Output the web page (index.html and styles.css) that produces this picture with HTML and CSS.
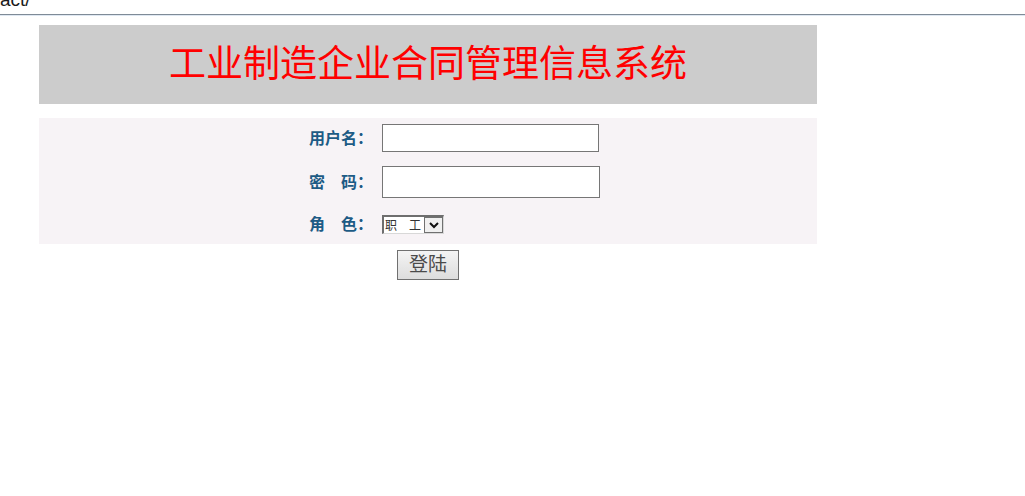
FILE: index.html
```html
<!DOCTYPE html>
<html lang="zh">
<head>
<meta charset="utf-8">
<title>工业制造企业合同管理信息系统</title>
<link rel="stylesheet" href="styles.css">
</head>
<body>
<div class="addr"><span class="addr-text">act/</span></div>
<div class="rule"></div>
<div class="page">
  <div class="banner">工业制造企业合同管理信息系统</div>
  <form class="panel">
    <div class="row row-user">
      <label class="lbl">用户名：</label>
      <input class="field field-user" type="text">
    </div>
    <div class="row row-pass">
      <label class="lbl">密　码：</label>
      <input class="field field-pass" type="password">
    </div>
    <div class="row row-role">
      <label class="lbl">角　色：</label>
      <span class="sel">
        <span class="sel-text">职　工</span>
        <span class="sel-btn"><svg width="14" height="10" viewBox="0 0 14 10"><path d="M3 3 L7 7 L11 3" fill="none" stroke="#111" stroke-width="2"/></svg></span>
      </span>
    </div>
  </form>
  <div class="actions"><button class="btn" type="button">登陆</button></div>
</div>
</body>
</html>
```
FILE: styles.css
```css
html, body {
  margin: 0;
  padding: 0;
  background: #fff;
}
body {
  font-family: "Liberation Serif", "Noto Sans CJK SC", serif;
}
.addr {
  height: 14px;
  overflow: hidden;
}
.addr-text {
  display: block;
  margin-top: -10px;
  font-family: "Liberation Sans", sans-serif;
  font-size: 19px;
  line-height: 19px;
  color: #1a1a1a;
}
.rule {
  height: 1px;
  background: #7f8b97;
  border-bottom: 1px solid #dfe8f2;
}
.page {
  width: 778px;
  margin: 9px 0 0 39px;
}
.banner {
  height: 79px;
  background: #cccccc;
  color: #ff0000;
  font-size: 37px;
  line-height: 79px;
  text-align: center;
  font-family: "Liberation Serif", "Noto Sans CJK SC", serif;
}
.panel {
  margin: 14px 0 0;
  background: #f7f3f6;
  padding: 6px 0 10px 270px;
  display: flex;
  flex-direction: column;
}
.row {
  display: flex;
  align-items: center;
}
.row-pass { margin-top: 14px; }
.row-role { margin-top: 17px; }
.lbl {
  width: 73px;
  font-size: 16px;
  line-height: 19px;
  font-weight: bold;
  color: #1d5b85;
  white-space: nowrap;
}
.field {
  box-sizing: border-box;
  margin: 0;
  border: 1px solid #767676;
  background: #fff;
  padding: 0 2px;
}
.field-user { width: 217px; height: 28px; }
.field-pass { width: 218px; height: 32px; }
.sel {
  box-sizing: border-box;
  display: inline-flex;
  align-items: stretch;
  width: 62px;
  height: 19px;
  border-top: 2px solid #6e6e6e;
  border-left: 2px solid #6e6e6e;
  border-right: 1px solid #d8d8d8;
  border-bottom: 1px solid #d8d8d8;
  background: #fff;
}
.sel-text {
  flex: 1;
  font-family: "Noto Sans CJK SC", sans-serif;
  font-size: 12px;
  line-height: 16px;
  color: #333;
  padding-left: 1px;
  white-space: nowrap;
}
.sel-btn {
  box-sizing: border-box;
  width: 19px;
  border: 1px solid #707070;
  background: #f0f0f0;
  display: flex;
  align-items: center;
  justify-content: center;
}
.actions {
  display: flex;
  justify-content: center;
  padding-top: 6px;
}
.btn {
  box-sizing: border-box;
  width: 62px;
  height: 30px;
  margin: 0;
  border: 1px solid #707070;
  border-radius: 0;
  background: linear-gradient(#f4f4f4, #dddddd);
  color: #4a4a4a;
  font-size: 19px;
  font-family: "Liberation Serif", "Noto Sans CJK SC", serif;
  padding: 0;
  line-height: 28px;
}
```
